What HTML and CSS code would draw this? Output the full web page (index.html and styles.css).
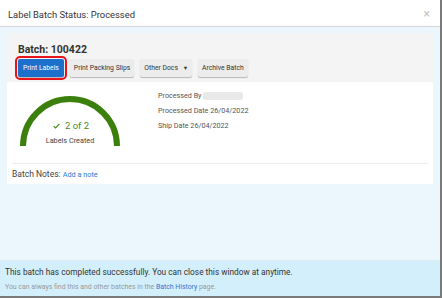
FILE: index.html
```html
<!DOCTYPE html>
<html lang="en">
  <head>
    <meta charset="UTF-8" />
    <title>Label Batch Status</title>
    <link rel="stylesheet" href="styles.css">
  </head>
  <body>
    <div class="modal">
      <!-- Modal heading -->
      <div class="modal-header">
        <h4>Label Batch Status: Processed</h4>
        <span class="close">&times;</span>
      </div>

      <div class="modal-body">
        <div class="batch">
          <div class="batch-top">
            <h3>Batch: 100422</h3>
            <div class="actions">
              <button class="btn primary">Print Labels</button>
              <button class="btn">Print Packing Slips</button>
              <button class="btn">Other Docs <span class="caret">&#9660;</span></button>
              <button class="btn">Archive Batch</button>
            </div>
          </div>

          <div class="card">
            <div class="stats">
              <!-- Gauge of labels created -->
              <div class="gauge">
                <svg width="100" height="52" viewBox="0 0 100 52">
                  <path d="M3 52 A47 47 0 0 1 97 52" fill="none" stroke="#3b7f0c" stroke-width="6" />
                </svg>
                <div class="gauge-text">
                  <div class="count">
                    <svg class="check" width="7" height="6" viewBox="0 0 7 6">
                      <path d="M0.6 3.1 L2.6 5 L6.4 0.8" fill="none" stroke="#4a8c1c" stroke-width="1.2" />
                    </svg>
                    2 of 2
                  </div>
                  <div class="caption">Labels Created</div>
                </div>
              </div>
              <div class="info">
                <div>Processed By <span class="blur"></span></div>
                <div>Processed Date 26/04/2022</div>
                <div>Ship Date 26/04/2022</div>
              </div>
            </div>
            <div class="notes">Batch Notes: <a href="#">Add a note</a></div>
          </div>
        </div>
      </div>

      <div class="modal-footer">
        <p class="done">This batch has completed successfully. You can close this window at anytime.</p>
        <p class="hint">You can always find this and other batches in the <a href="#">Batch History</a> page.</p>
      </div>
    </div>
  </body>
</html>
```

FILE: styles.css
```css
* {
  margin: 0;
  padding: 0;
  box-sizing: border-box;
  font-family: Roboto, "Liberation Sans", sans-serif;
}

body {
  background-color: #7a7a7a;
  width: 442px;
  height: 298px;
  overflow: hidden;
}

.modal {
  width: 440px;
  height: 296px;
  background-color: #ebf6fd;
  display: flex;
  flex-direction: column;
}

.modal-header {
  height: 27px;
  background-color: white;
  border-bottom: 1px solid #d6d6d6;
  display: flex;
  align-items: center;
  justify-content: space-between;
  padding: 2px 10px 0 8px;
}

.modal-header h4 {
  font-size: 9.4px;
  font-weight: 400;
  color: #333;
}

.close {
  font-size: 12px;
  color: #c4c4c4;
}

.modal-body {
  flex: 1;
  padding: 6px 7px 0 7px;
}

.batch-top {
  background-color: #f4f4f4;
  padding: 10px 11px 5px 10px;
}

.batch-top h3 {
  font-size: 10.5px;
  line-height: 14px;
  font-weight: 700;
  color: #333;
  padding-left: 1px;
}

.actions {
  display: flex;
  gap: 6px;
  margin-top: 2px;
}

.btn {
  height: 18px;
  padding: 0 4px;
  font-size: 6.8px;
  color: #333;
  background-color: #ececec;
  border: none;
  border-radius: 2px;
  box-shadow: 0 1px 1px rgba(0, 0, 0, 0.25);
}

.btn.primary {
  background-color: #1c6fcb;
  color: white;
  outline: 2px solid #e8141b;
  outline-offset: 1px;
  margin-left: 1px;
  padding: 0 5px;
}

.caret {
  font-size: 5.5px;
  margin-left: 3px;
}

.card {
  background-color: white;
}

.stats {
  display: flex;
  height: 81px;
  padding: 12px 0 0 13px;
}

.gauge {
  position: relative;
  width: 100px;
  height: 52px;
}

.gauge svg {
  display: block;
}

.gauge-text {
  position: absolute;
  left: 0;
  top: 25px;
  width: 100px;
  text-align: center;
}

.count {
  font-size: 9.5px;
  line-height: 14px;
  color: #4a8c1c;
  display: flex;
  justify-content: center;
  align-items: center;
  gap: 5px;
  padding-left: 2px;
}

.gauge .check {
  display: inline-block;
}

.caption {
  font-size: 7.3px;
  line-height: 14px;
  color: #444;
  margin-top: 1px;
}

.info {
  margin-left: 38px;
  margin-top: -6px;
  font-size: 7.2px;
  line-height: 15px;
  color: #555;
}

.blur {
  display: inline-block;
  width: 40px;
  height: 8px;
  background-color: #e9e9e9;
  vertical-align: middle;
  border-radius: 2px;
}

.notes {
  margin: 0 5px;
  border-top: 1px solid #ececec;
  height: 21px;
  line-height: 20px;
  font-size: 8.5px;
  color: #444;
}

.notes a {
  font-size: 7.3px;
}

.notes a,
.hint a {
  color: #2a7ad2;
  text-decoration: none;
}

.modal-footer {
  height: 36px;
  background-color: #d4effc;
  border-top: 1px solid #dfeef6;
  padding: 4px 5px 0 5px;
}

.done {
  font-size: 8.3px;
  line-height: 15px;
  color: #333;
}

.hint {
  font-size: 6.9px;
  line-height: 14px;
  color: #999;
}
```
